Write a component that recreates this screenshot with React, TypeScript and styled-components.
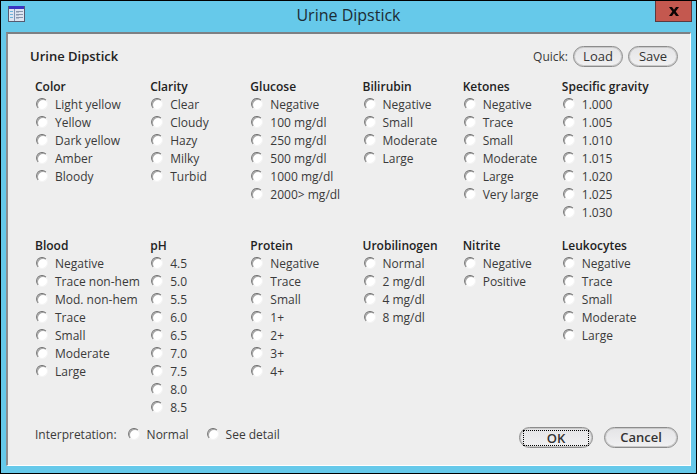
import React from "react";
import styled, { createGlobalStyle } from "styled-components";

const GlobalStyle = createGlobalStyle`
  * { box-sizing: border-box; }
  body {
    margin: 0;
    font-family: "Open Sans", "Noto Sans", sans-serif;
    font-size: 12px;
    color: #3a3a3a;
  }
`;

const Window = styled.main`
  display: flex;
  flex-direction: column;
  min-height: 100vh;
  padding: 0 5px 7px;
  background: #66c9ea;
  border: 1px solid #000;
`;

const TitleBar = styled.header`
  display: grid;
  grid-template-columns: 1fr auto 1fr;
  height: 31px;
`;

const WindowIcon = styled.svg`
  margin: 4px 0 0 2px;
`;

const WindowTitle = styled.h1`
  margin: 0;
  font-size: 16px;
  line-height: 28px;
  font-weight: 400;
  color: #1c2c34;
`;

const CloseButton = styled.button`
  display: flex;
  justify-self: end;
  align-items: center;
  justify-content: center;
  width: 37px;
  height: 21px;
  margin-right: -1px;
  padding: 0;
  border: 1px solid #5b3a40;
  border-top: 0;
  background: #c4584f;
`;

const Panel = styled.form`
  flex: 1;
  padding: 11px 12px 17px 27px;
  background: #eeeeee;
  border: 1px solid #fff;
  border-top: 2px solid #7d8084;
  border-left: 2px solid #8a8c8e;
`;

const PanelHeader = styled.div`
  display: flex;
  align-items: center;
  justify-content: space-between;
  height: 22px;
  margin-bottom: 10px;
`;

const PanelTitle = styled.h2`
  margin: 0 0 0 -5px;
  font-size: 13px;
  line-height: 22px;
  font-weight: 600;
  color: #222;
`;

const ButtonRow = styled.div<{ $gap: number }>`
  display: flex;
  align-items: center;
  gap: ${(p) => p.$gap}px;
`;

const PillButton = styled.button<{ $wide?: boolean }>`
  width: ${(p) => (p.$wide ? 74 : 50)}px;
  height: 21px;
  padding: ${(p) => (p.$wide ? "0 3px" : "0")};
  border: 1px solid #8c8c8c;
  border-radius: 11px;
  background: linear-gradient(#e4e4e6, #f1f1f2);
  box-shadow: inset 0 0 0 1px #c9c9c9;
  color: #333;
  font-family: inherit;
  font-size: 13px;
  line-height: 17px;
  font-weight: ${(p) => (p.$wide ? 600 : 400)};
`;

const FocusFrame = styled.span`
  display: block;
  height: 16px;
  border: 1px dotted #000;
  line-height: 15px;
`;

const Groups = styled.div`
  display: grid;
  grid-template-columns: 115fr 100fr 112fr 100fr 99fr 116fr;
  row-gap: 14px;
`;

const Group = styled.fieldset`
  min-width: 0;
  margin: 0;
  padding: 0;
  border: 0;
`;

const GroupTitle = styled.legend`
  padding: 0;
  font-size: 12px;
  line-height: 19px;
  font-weight: 600;
  color: #222;
`;

const Option = styled.label`
  display: flex;
  align-items: flex-start;
  gap: 7px;
  line-height: 18px;
  white-space: nowrap;
`;

const Radio = styled.input`
  appearance: none;
  flex: none;
  width: 12px;
  height: 12px;
  margin: 2px 0 0 1px;
  border: 1px solid;
  border-color: #6c6c6c #f4f4f4 #f4f4f4 #7c7c7c;
  border-radius: 50%;
  background: #fff;
  box-shadow: inset 1px 1px 0 #a5a5a5;
  &:checked {
    background: radial-gradient(#222 0 2px, #fff 3px);
  }
`;

const Footer = styled.div`
  display: flex;
  align-items: flex-end;
  justify-content: space-between;
  margin-top: 9px;
`;

const Interpretation = styled.div`
  display: flex;
  align-items: flex-start;
  margin-bottom: 4px;
  line-height: 18px;
`;

const Choices = styled.div`
  display: flex;
  gap: 17px;
  margin-left: 10px;
`;

const groups: [string, string[]][] = [
  ["Color", ["Light yellow", "Yellow", "Dark yellow", "Amber", "Bloody"]],
  ["Clarity", ["Clear", "Cloudy", "Hazy", "Milky", "Turbid"]],
  ["Glucose", ["Negative", "100 mg/dl", "250 mg/dl", "500 mg/dl", "1000 mg/dl", "2000> mg/dl"]],
  ["Bilirubin", ["Negative", "Small", "Moderate", "Large"]],
  ["Ketones", ["Negative", "Trace", "Small", "Moderate", "Large", "Very large"]],
  ["Specific gravity", ["1.000", "1.005", "1.010", "1.015", "1.020", "1.025", "1.030"]],
  ["Blood", ["Negative", "Trace non-hem", "Mod. non-hem", "Trace", "Small", "Moderate", "Large"]],
  ["pH", ["4.5", "5.0", "5.5", "6.0", "6.5", "7.0", "7.5", "8.0", "8.5"]],
  ["Protein", ["Negative", "Trace", "Small", "1+", "2+", "3+", "4+"]],
  ["Urobilinogen", ["Normal", "2 mg/dl", "4 mg/dl", "8 mg/dl"]],
  ["Nitrite", ["Negative", "Positive"]],
  ["Leukocytes", ["Negative", "Trace", "Small", "Moderate", "Large"]],
];

function RadioOption({ name, label }: { name: string; label: string }) {
  return (
    <Option>
      <Radio type="radio" name={name} value={label} />
      <span>{label}</span>
    </Option>
  );
}

export default function App() {
  return (
    <>
      <GlobalStyle />
      <Window>
        <TitleBar>
          <WindowIcon width="18" height="18" viewBox="0 0 18 18" aria-hidden="true">
            <rect x="0.5" y="1.5" width="16" height="15" fill="#dde4f0" stroke="#555a70" />
            <rect x="1" y="1" width="15" height="3" fill="#3a35c4" />
            <path d="M6.500 4v12" stroke="#7f95b5" />
            <path d="M2 6.500h3M2 9.500h3M2 12.500h3" stroke="#6db4dc" />
            <path d="M8 6.500h7M8 9.500h7M8 12.500h7" stroke="#8796ad" />
            <path d="M8 7.500h3M8 10.500h3M8 13.500h3" stroke="#b3bfd0" />
          </WindowIcon>
          <WindowTitle>Urine Dipstick</WindowTitle>
          <CloseButton type="button" aria-label="Close">
            <svg width="10" height="9" viewBox="0 0 10 9" aria-hidden="true">
              <path d="M0 0h3l2 2.700L7 0h3L6.700 4.500 10 9H7L5 6.300 3 9H0l3.300-4.500z" fill="#0c0505" />
            </svg>
          </CloseButton>
        </TitleBar>
        <Panel onSubmit={(e) => e.preventDefault()}>
          <PanelHeader>
            <PanelTitle>Urine Dipstick</PanelTitle>
            <ButtonRow $gap={5}>
              <span>Quick:</span>
              <PillButton type="button">Load</PillButton>
              <PillButton type="button">Save</PillButton>
            </ButtonRow>
          </PanelHeader>
          <Groups>
            {groups.map(([title, options]) => (
              <Group key={title}>
                <GroupTitle>{title}</GroupTitle>
                {options.map((o) => (
                  <RadioOption key={o} name={title} label={o} />
                ))}
              </Group>
            ))}
          </Groups>
          <Footer>
            <Interpretation role="radiogroup" aria-labelledby="interpretation">
              <span id="interpretation">Interpretation:</span>
              <Choices>
                <RadioOption name="interpretation" label="Normal" />
                <RadioOption name="interpretation" label="See detail" />
              </Choices>
            </Interpretation>
            <ButtonRow $gap={11}>
              <PillButton type="submit" $wide>
                <FocusFrame>OK</FocusFrame>
              </PillButton>
              <PillButton type="button" $wide>
                Cancel
              </PillButton>
            </ButtonRow>
          </Footer>
        </Panel>
      </Window>
    </>
  );
}
